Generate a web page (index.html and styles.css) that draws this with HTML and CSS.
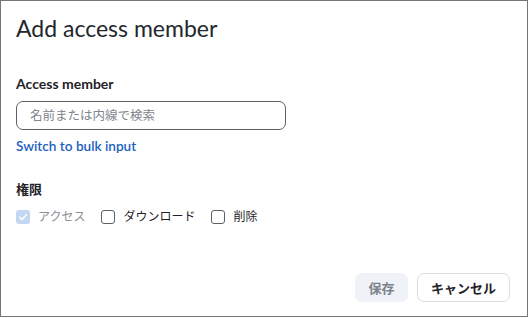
FILE: index.html
```html
<!DOCTYPE html>
<html lang="ja">
<head>
<meta charset="utf-8">
<title>Add access member</title>
<link rel="stylesheet" href="styles.css">
</head>
<body>
<div class="dialog">
  <h1 class="title">Add access member</h1>
  <div class="field">
    <label class="label" for="member">Access member</label>
    <input id="member" class="input" type="text" placeholder="名前または内線で検索">
    <a class="link" href="#">Switch to bulk input</a>
  </div>
  <div class="field perms">
    <div class="label label-ja">権限</div>
    <div class="checks">
      <label class="check disabled"><span class="box checked"><svg viewBox="0 0 14 14" width="14" height="14"><path d="M3.6 7.3 L6 9.5 L10.4 4.8" fill="none" stroke="#ffffff" stroke-width="1.4" stroke-linecap="round" stroke-linejoin="round"/></svg></span>アクセス</label>
      <label class="check"><span class="box"></span>ダウンロード</label>
      <label class="check"><span class="box"></span>削除</label>
    </div>
  </div>
  <div class="spacer"></div>
  <div class="actions">
    <button class="btn btn-save" type="button">保存</button>
    <button class="btn btn-cancel" type="button">キャンセル</button>
  </div>
</div>
</body>
</html>
```
FILE: styles.css
```css
html, body {
  margin: 0;
  padding: 0;
  background: #ffffff;
}
body {
  font-family: "Lato", "Noto Sans CJK JP", sans-serif;
  color: #1f2329;
}
.dialog {
  box-sizing: border-box;
  width: 528px;
  height: 317px;
  border: 1px solid #767676;
  padding: 11px 17px 14px 15px;
  display: flex;
  flex-direction: column;
}
.title {
  margin: 0;
  font-size: 23px;
  line-height: 32px;
  font-weight: 400;
  color: #23272e;
}
.field {
  display: flex;
  flex-direction: column;
  align-items: flex-start;
}
.field:first-of-type {
  margin-top: 30px;
}
.label {
  font-size: 14px;
  line-height: 20px;
  font-weight: 700;
  color: #1f2329;
}
.label-ja {
  font-size: 13px;
  line-height: 19px;
}
.input {
  box-sizing: border-box;
  margin-top: 7px;
  width: 270px;
  height: 29px;
  border: 1px solid #5c6066;
  border-radius: 7px;
  padding: 0 13px;
  font-family: inherit;
  font-size: 12.5px;
  color: #1f2329;
  outline: none;
}
.input::placeholder {
  color: #80868e;
}
.link {
  margin-top: 7px;
  font-size: 13.6px;
  line-height: 18px;
  font-weight: 600;
  color: #1c60bf;
  text-decoration: none;
}
.perms {
  margin-top: 25px;
}
.checks {
  margin-top: 9px;
  display: flex;
  gap: 16px;
}
.check {
  display: flex;
  align-items: center;
  gap: 8px;
  font-size: 12px;
  line-height: 18px;
  color: #1f2329;
}
.check.disabled {
  color: #8a8f96;
}
.box {
  box-sizing: border-box;
  width: 14px;
  height: 14px;
  border: 1px solid #5c6066;
  border-radius: 3px;
  display: flex;
  align-items: center;
  justify-content: center;
}
.box.checked {
  border: none;
  background: #c4d7f2;
}
.spacer {
  flex: 1;
}
.actions {
  display: flex;
  justify-content: flex-end;
  gap: 9px;
}
.btn {
  box-sizing: border-box;
  height: 29px;
  border-radius: 7px;
  font-family: inherit;
  font-size: 13px;
  font-weight: 700;
  padding: 0;
}
.btn-save {
  width: 53px;
  background: #eff2f6;
  border: none;
  color: #7d838b;
}
.btn-cancel {
  width: 93px;
  background: #ffffff;
  border: 1px solid #d9dce1;
  color: #1f2329;
}
```
